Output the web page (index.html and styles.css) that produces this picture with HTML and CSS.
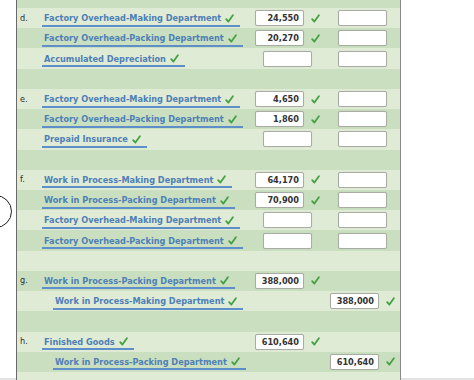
FILE: index.html
```html
<!DOCTYPE html>
<html>
<head>
<meta charset="utf-8">
<link rel="stylesheet" href="styles.css">
</head>
<body>
<div class="page">
  <div class="ring"></div>
  <div class="panel">
    <div class="row dark blank"></div>

    <div class="row light">
      <div class="tag">d.</div>
      <div class="acct"><span class="sel">Factory Overhead-Making Department<i class="ck"></i></span></div>
      <div class="amt"><span class="box">24,550</span><i class="ck"></i></div>
      <div class="amt"><span class="box"></span></div>
    </div>
    <div class="row dark">
      <div class="tag"></div>
      <div class="acct"><span class="sel">Factory Overhead-Packing Department<i class="ck"></i></span></div>
      <div class="amt"><span class="box">20,270</span><i class="ck"></i></div>
      <div class="amt"><span class="box"></span></div>
    </div>
    <div class="row light">
      <div class="tag"></div>
      <div class="acct"><span class="sel">Accumulated Depreciation<i class="ck"></i></span></div>
      <div class="amt"><span class="box"></span></div>
      <div class="amt"><span class="box"></span></div>
    </div>
    <div class="row dark blank"></div>

    <div class="row light">
      <div class="tag">e.</div>
      <div class="acct"><span class="sel">Factory Overhead-Making Department<i class="ck"></i></span></div>
      <div class="amt"><span class="box">4,650</span><i class="ck"></i></div>
      <div class="amt"><span class="box"></span></div>
    </div>
    <div class="row dark">
      <div class="tag"></div>
      <div class="acct"><span class="sel">Factory Overhead-Packing Department<i class="ck"></i></span></div>
      <div class="amt"><span class="box">1,860</span><i class="ck"></i></div>
      <div class="amt"><span class="box"></span></div>
    </div>
    <div class="row light">
      <div class="tag"></div>
      <div class="acct"><span class="sel">Prepaid Insurance<i class="ck"></i></span></div>
      <div class="amt"><span class="box"></span></div>
      <div class="amt"><span class="box"></span></div>
    </div>
    <div class="row dark blank"></div>

    <div class="row light">
      <div class="tag">f.</div>
      <div class="acct"><span class="sel">Work in Process-Making Department<i class="ck"></i></span></div>
      <div class="amt"><span class="box">64,170</span><i class="ck"></i></div>
      <div class="amt"><span class="box"></span></div>
    </div>
    <div class="row dark">
      <div class="tag"></div>
      <div class="acct"><span class="sel">Work in Process-Packing Department<i class="ck"></i></span></div>
      <div class="amt"><span class="box">70,900</span><i class="ck"></i></div>
      <div class="amt"><span class="box"></span></div>
    </div>
    <div class="row light">
      <div class="tag"></div>
      <div class="acct"><span class="sel">Factory Overhead-Making Department<i class="ck"></i></span></div>
      <div class="amt"><span class="box"></span></div>
      <div class="amt"><span class="box"></span></div>
    </div>
    <div class="row dark">
      <div class="tag"></div>
      <div class="acct"><span class="sel">Factory Overhead-Packing Department<i class="ck"></i></span></div>
      <div class="amt"><span class="box"></span></div>
      <div class="amt"><span class="box"></span></div>
    </div>
    <div class="row light blank"></div>

    <div class="row dark">
      <div class="tag">g.</div>
      <div class="acct"><span class="sel">Work in Process-Packing Department<i class="ck"></i></span></div>
      <div class="amt"><span class="box">388,000</span><i class="ck"></i></div>
      <div class="amt"></div>
    </div>
    <div class="row light">
      <div class="tag"></div>
      <div class="acct indent"><span class="sel">Work in Process-Making Department<i class="ck"></i></span></div>
      <div class="amt"></div>
      <div class="amt"><span class="box">388,000</span><i class="ck"></i></div>
    </div>
    <div class="row dark blank"></div>

    <div class="row light">
      <div class="tag">h.</div>
      <div class="acct"><span class="sel">Finished Goods<i class="ck"></i></span></div>
      <div class="amt"><span class="box">610,640</span><i class="ck"></i></div>
      <div class="amt"></div>
    </div>
    <div class="row dark">
      <div class="tag"></div>
      <div class="acct indent"><span class="sel">Work in Process-Packing Department<i class="ck"></i></span></div>
      <div class="amt"></div>
      <div class="amt"><span class="box">610,640</span><i class="ck"></i></div>
    </div>
    <div class="row light blank"></div>
  </div>
</div>
</body>
</html>
```

FILE: styles.css
```css
html, body {
  margin: 0;
  padding: 0;
}
body {
  width: 474px;
  height: 380px;
  overflow: hidden;
  background: linear-gradient(to bottom, #ffffff 378px, #e2e2e2 378px);
  font-family: "DejaVu Sans", Verdana, sans-serif;
}
.page {
  position: relative;
  height: 380px;
  overflow: hidden;
}
.ring {
  position: absolute;
  left: -21px;
  top: 195px;
  width: 31px;
  height: 31px;
  border: 1.6px solid #1e1e1e;
  border-radius: 50%;
}
.panel {
  margin-left: 16px;
  margin-top: -12.2px;
  width: 385px;
  box-sizing: border-box;
  border-left: 1px solid #6a6a6a;
  border-right: 1px solid #8a8a8a;
  display: flex;
  flex-direction: column;
}
.row {
  height: 20.22px;
  display: grid;
  grid-template-columns: 25px 208px 75px 75px;
  align-items: center;
}
.light { background: #dfebd5; }
.dark { background: #c9dfbf; }
.tag {
  padding-left: 3px;
  font-size: 8.2px;
  color: #2e2e2e;
  line-height: 14px;
  margin-top: -1px;
}
.acct {
  display: flex;
  align-items: center;
}
.acct.indent {
  padding-left: 11px;
}
.sel {
  display: inline-flex;
  align-items: center;
  padding: 0 6px 0 2px;
  height: 13px;
  border-bottom: 2px solid #5e8fc8;
  font-weight: bold;
  font-size: 8.2px;
  color: #4e7fb6;
  white-space: nowrap;
  margin-top: 2px;
}
.ck {
  display: inline-block;
  width: 9px;
  height: 9px;
  margin-left: 4px;
  background: no-repeat center/9px 9px url("data:image/svg+xml,%3Csvg xmlns='http://www.w3.org/2000/svg' viewBox='0 0 9 9'%3E%3Cpath d='M1.2 5.1 L3.4 7.6 L7.9 1.2' fill='none' stroke='%2345a045' stroke-width='1.8' stroke-linecap='round' stroke-linejoin='round'/%3E%3C/svg%3E");
}
.amt {
  display: flex;
  justify-content: center;
  align-items: center;
}
.amt .ck {
  margin-left: 7px;
}
.box {
  box-sizing: border-box;
  width: 49px;
  height: 16px;
  background: #fff;
  border: 1px solid #a9aca5;
  border-radius: 2px;
  box-shadow: 0 0 1px rgba(0,0,0,0.15);
  font-weight: bold;
  font-size: 8.2px;
  color: #333;
  text-align: right;
  padding-right: 4px;
  line-height: 14px;
}
```
